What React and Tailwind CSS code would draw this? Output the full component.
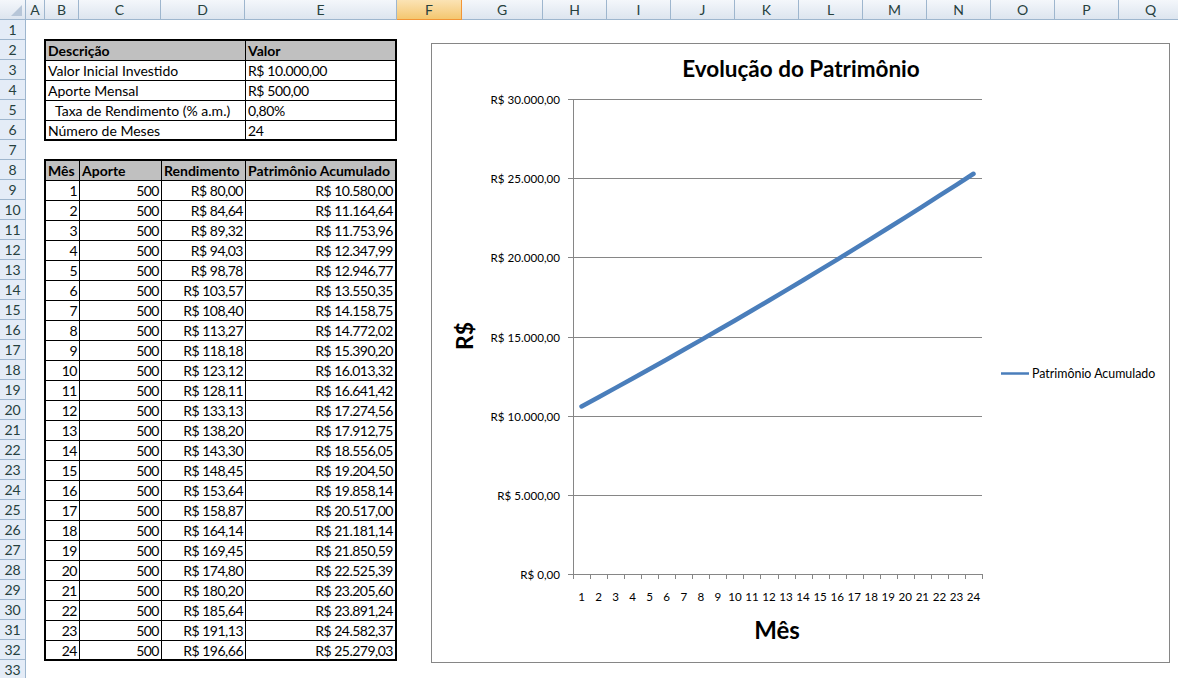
import React from 'react'

const columns = [
  { l: 'A', w: 'w-[19px]' },
  { l: 'B', w: 'w-[34px]' },
  { l: 'C', w: 'w-[82px]' },
  { l: 'D', w: 'w-[84px]' },
  { l: 'E', w: 'w-[152px]' },
  { l: 'F', w: 'w-[65px]', active: true },
  { l: 'G', w: 'w-[81px]' },
  { l: 'H', w: 'w-[64px]' },
  { l: 'I', w: 'w-[64px]' },
  { l: 'J', w: 'w-[64px]' },
  { l: 'K', w: 'w-[64px]' },
  { l: 'L', w: 'w-[64px]' },
  { l: 'M', w: 'w-[64px]' },
  { l: 'N', w: 'w-[64px]' },
  { l: 'O', w: 'w-[64px]' },
  { l: 'P', w: 'w-[64px]' },
  { l: 'Q', w: 'w-[64px]' },
]

const rendimento = [
  '80,00', '84,64', '89,32', '94,03', '98,78', '103,57', '108,40', '113,27',
  '118,18', '123,12', '128,11', '133,13', '138,20', '143,30', '148,45', '153,64',
  '158,87', '164,14', '169,45', '174,80', '180,20', '185,64', '191,13', '196,66',
]

const patrimonio = [
  '10.580,00', '11.164,64', '11.753,96', '12.347,99', '12.946,77', '13.550,35',
  '14.158,75', '14.772,02', '15.390,20', '16.013,32', '16.641,42', '17.274,56',
  '17.912,75', '18.556,05', '19.204,50', '19.858,14', '20.517,00', '21.181,14',
  '21.850,59', '22.525,39', '23.205,60', '23.891,24', '24.582,37', '25.279,03',
]

const values = patrimonio.map(p => parseFloat(p.replace(/\./g, '').replace(',', '.')))

const params = [
  ['Valor Inicial Investido', 'R$ 10.000,00'],
  ['Aporte Mensal', 'R$ 500,00'],
  ['Taxa de Rendimento (% a.m.)', '0,80%', true],
  ['Número de Meses', '24'],
]

function ColumnHeaders() {
  return (
    <div className="flex h-[20px]">
      <div className="w-[26px] shrink-0 h-[20px] border-r border-b border-[#9eb6ce] bg-linear-to-b from-[#f4f7fb] to-[#dde5ef] relative">
        <svg width="25" height="19" className="absolute inset-0">
          <polygon points="22,5 22,16 11,16" fill="#b7c6d8" />
        </svg>
      </div>
      {columns.map(c => (
        <div
          key={c.l}
          className={`${c.w} shrink-0 h-[20px] border-r border-b flex items-center justify-center text-[14px] ${
            c.active
              ? 'bg-linear-to-b from-[#fbe3b4] to-[#f4c76f] border-[#f29536] text-[#27413e]'
              : 'bg-linear-to-b from-[#f4f7fb] to-[#dde5ef] border-[#9eb6ce] text-[#27413e]'
          }`}
        >
          {c.l}
        </div>
      ))}
    </div>
  )
}

function RowHeaders() {
  return (
    <div className="w-[26px] shrink-0">
      {Array.from({ length: 33 }, (_, i) => (
        <div
          key={i}
          className="h-[20px] border-r border-b border-[#9eb6ce] bg-[#e4ecf7] flex items-center justify-center text-[14px] text-[#27413e]"
        >
          {i + 1}
        </div>
      ))}
    </div>
  )
}

function ParamsTable() {
  return (
    <div className="w-[353px] border-2 border-black text-[14px] leading-[20px] text-black">
      <div className="flex h-[20px] border-b border-black bg-[#c0c0c0] font-bold">
        <div className="w-[200px] border-r border-black px-[2px]">Descrição</div>
        <div className="flex-1 px-[2px]">Valor</div>
      </div>
      {params.map(([label, value, indent], i) => (
        <div
          key={label}
          className={`flex ${i === params.length - 1 ? 'h-[18px]' : 'h-[20px] border-b border-black'}`}
        >
          <div className={`w-[200px] border-r border-black whitespace-nowrap ${indent ? 'pl-[9px]' : 'px-[2px]'}`}>{label}</div>
          <div className="flex-1 px-[2px] tracking-[-0.4px]">{value}</div>
        </div>
      ))}
    </div>
  )
}

function EvolutionTable() {
  return (
    <div className="w-[353px] mt-[18px] border-2 border-black text-[14px] leading-[20px] text-black">
      <div className="flex h-[20px] border-b border-black bg-[#c0c0c0] font-bold">
        <div className="w-[34px] border-r border-black px-[2px]">Mês</div>
        <div className="w-[82px] border-r border-black px-[2px]">Aporte</div>
        <div className="w-[84px] border-r border-black px-[2px]">Rendimento</div>
        <div className="flex-1 px-[2px] whitespace-nowrap">Patrimônio Acumulado</div>
      </div>
      {rendimento.map((r, i) => (
        <div key={i} className={`flex text-right tracking-[-0.5px] ${i === 23 ? 'h-[18px]' : 'h-[20px] border-b border-black'}`}>
          <div className="w-[34px] border-r border-black px-[2px]">{i + 1}</div>
          <div className="w-[82px] border-r border-black px-[2px]">500</div>
          <div className="w-[84px] border-r border-black px-[2px]">R$ {r}</div>
          <div className="flex-1 px-[2px]">R$ {patrimonio[i]}</div>
        </div>
      ))}
    </div>
  )
}

function Chart() {
  const x0 = 141
  const x1 = 550
  const y0 = 530
  const yTop = 55
  const step = (x1 - x0) / 24
  const yOf = v => y0 - (v / 30000) * (y0 - yTop)
  const ticks = [
    [0, 'R$ 0,00'],
    [5000, 'R$ 5.000,00'],
    [10000, 'R$ 10.000,00'],
    [15000, 'R$ 15.000,00'],
    [20000, 'R$ 20.000,00'],
    [25000, 'R$ 25.000,00'],
    [30000, 'R$ 30.000,00'],
  ]
  const points = values.map((v, i) => `${x0 + (i + 0.5) * step},${yOf(v)}`).join(' ')

  return (
    <div className="absolute left-[431px] top-[43px] w-[739px] h-[620px] border border-[#868686] bg-white">
      <svg width="737" height="618" className="block">
        <text x="369" y="33" textAnchor="middle" fontSize="22.5" fontWeight="700" fill="#000">
          Evolução do Patrimônio
        </text>

        {ticks.map(([v, label]) => {
          const gy = Math.round(yOf(v)) + 0.5
          return (
            <g key={v}>
              <line x1="136" x2={x1} y1={gy} y2={gy} stroke="#868686" strokeWidth="1" shapeRendering="crispEdges" />
              <text x="128" y={gy + 4} textAnchor="end" fontSize="11.6" fill="#000">
                {label}
              </text>
            </g>
          )
        })}

        <line x1={x0 + 0.5} x2={x0 + 0.5} y1={yTop} y2={y0 + 5} stroke="#868686" strokeWidth="1" shapeRendering="crispEdges" />
        {Array.from({ length: 25 }, (_, i) => {
          const tx = Math.round(x0 + i * step) + 0.5
          return <line key={i} x1={tx} x2={tx} y1={y0} y2={y0 + 5} stroke="#868686" strokeWidth="1" shapeRendering="crispEdges" />
        })}
        {Array.from({ length: 24 }, (_, i) => (
          <text key={i} x={x0 + (i + 0.5) * step} y="557" textAnchor="middle" fontSize="11.6" fill="#000">
            {i + 1}
          </text>
        ))}

        <polyline points={points} fill="none" stroke="#4a7ebb" strokeWidth="4.5" strokeLinecap="round" strokeLinejoin="round" />

        <text x="345" y="595" textAnchor="middle" fontSize="24" fontWeight="700" fill="#000">
          Mês
        </text>
        <text x="0" y="0" textAnchor="middle" fontSize="23" fontWeight="700" fill="#000" transform="translate(41 292) rotate(-90)">
          R$
        </text>

        <line x1="569" x2="597" y1="329.5" y2="329.5" stroke="#4a7ebb" strokeWidth="2.5" />
        <text x="600" y="333.5" fontSize="12.4" fill="#000">
          Patrimônio Acumulado
        </text>
      </svg>
    </div>
  )
}

export default function App() {
  return (
    <div className="relative w-[1178px] h-[678px] overflow-hidden bg-white font-[Lato,'Liberation_Sans',sans-serif]">
      <ColumnHeaders />
      <div className="flex">
        <RowHeaders />
        <div className="flex-1 pl-[18px] pt-[19px]">
          <ParamsTable />
          <EvolutionTable />
        </div>
      </div>
      <Chart />
    </div>
  )
}
